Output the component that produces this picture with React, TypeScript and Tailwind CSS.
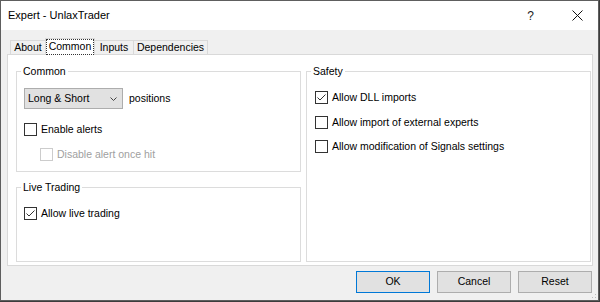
import React from "react";

function Box({ checked = false, disabled = false }: { checked?: boolean; disabled?: boolean }) {
  return (
    <span
      className={
        disabled
          ? "flex h-[13px] w-[13px] shrink-0 items-center justify-center border border-[#cccccc] bg-white"
          : "flex h-[13px] w-[13px] shrink-0 items-center justify-center border border-[#333333] bg-white"
      }
    >
      {checked && (
        <svg width="11" height="11" viewBox="0 0 11 11">
          <path d="M1.5 5.5 L4 8 L9.5 2.5" fill="none" stroke="#333333" strokeWidth="1" />
        </svg>
      )}
    </span>
  );
}

function Check({ label, checked = false, disabled = false, className = "" }: { label: string; checked?: boolean; disabled?: boolean; className?: string }) {
  return (
    <div className={"flex h-[13px] items-center gap-[4px] leading-[13px] " + className}>
      <Box checked={checked} disabled={disabled} />
      <span className={disabled ? "text-[#a0a0a0]" : "text-black"}>{label}</span>
    </div>
  );
}

export default function App() {
  return (
    <div className="flex h-[302px] w-[600px] bg-[#3c3c3c] font-['Liberation_Sans',Arial,sans-serif] text-[10.5px] text-black">
      <div className="relative flex h-[301px] w-[599px] flex-col border border-[#5e5e5e] bg-[#f0f0f0]">
        {/* title bar */}
        <div className="flex h-[29px] items-center bg-white pl-[7px] pr-[15px]">
          <span className="text-[11px] text-black">Expert - UnlaxTrader</span>
          <span className="ml-auto text-[12px] leading-[12px] text-[#222]">?</span>
          <svg className="ml-[38px]" width="11" height="11" viewBox="0 0 11 11">
            <path d="M0.5 0.5 L10.5 10.5 M10.5 0.5 L0.5 10.5" stroke="#111" strokeWidth="1" fill="none" />
          </svg>
        </div>
        {/* body */}
        <div className="flex flex-col pl-[6px] pr-[5px] pt-[8px]">
          {/* tabs */}
          <div className="flex h-[16px] items-end pl-[3px]">
            <div className="flex h-[14px] w-[35px] items-center justify-center border-l border-t border-[#d9d9d9] leading-[13px]">About</div>
            <div className="relative z-10 -mb-px flex h-[17px] w-[50px] border-l border-r border-t border-[#d9d9d9] bg-white p-[0px]">
              <span className="flex flex-1 items-center justify-center border border-dotted border-[#333] pb-[1px] leading-[13px]">Common</span>
            </div>
            <div className="flex h-[14px] w-[39px] items-center justify-center border-r border-t border-[#d9d9d9] leading-[13px]">Inputs</div>
            <div className="flex h-[14px] w-[74px] items-center justify-center border-r border-t border-[#d9d9d9] leading-[13px]">Dependencies</div>
          </div>
          {/* panel */}
          <div className="grid h-[212px] w-[586px] grid-cols-[285px_285px] gap-x-[5px] border border-[#d9d9d9] bg-white pl-[8px] pt-[10px]">
            <div className="flex flex-col gap-[9px]">
              <fieldset className="m-0 h-[107px] border border-[#dcdcdc] p-0">
                <legend className="ml-[4px] px-[2px] leading-[12px]">Common</legend>
                <div className="flex flex-col pl-[7px]">
                  <div className="mt-[11px] flex h-[21px] items-center">
                    <div className="flex h-[21px] w-[99px] items-center justify-between border border-[#adadad] bg-[#e1e1e1] pl-[3px] pr-[5px]">
                      <span>Long &amp; Short</span>
                      <svg width="7" height="4" viewBox="0 0 7 4">
                        <path d="M0.5 0.5 L3.5 3.5 L6.5 0.5" fill="none" stroke="#444" strokeWidth="1" />
                      </svg>
                    </div>
                    <span className="ml-[6px]">positions</span>
                  </div>
                  <Check className="mt-[14px]" label="Enable alerts" />
                  <Check className="mt-[12px] pl-[16px]" label="Disable alert once hit" disabled />
                </div>
              </fieldset>
              <fieldset className="m-0 h-[81px] border border-[#dcdcdc] p-0">
                <legend className="ml-[4px] px-[2px] leading-[12px]">Live Trading</legend>
                <div className="flex flex-col pl-[7px]">
                  <Check className="mt-[14px]" label="Allow live trading" checked />
                </div>
              </fieldset>
            </div>
            <fieldset className="m-0 h-[197px] border border-[#dcdcdc] p-0">
              <legend className="ml-[4px] px-[2px] leading-[12px]">Safety</legend>
              <div className="flex flex-col pl-[8px]">
                <Check className="mt-[14px]" label="Allow DLL imports" checked />
                <Check className="mt-[12px]" label="Allow import of external experts" />
                <Check className="mt-[11px]" label="Allow modification of Signals settings" />
              </div>
            </fieldset>
          </div>
          {/* buttons */}
          <div className="mr-[1px] mt-[5px] flex justify-end gap-[7px]">
            <button className="h-[22px] w-[74px] border border-[#0078d7] bg-[#e1e1e1] text-black">OK</button>
            <button className="h-[22px] w-[74px] border border-[#adadad] bg-[#e1e1e1] text-black">Cancel</button>
            <button className="h-[22px] w-[74px] border border-[#adadad] bg-[#e1e1e1] text-black">Reset</button>
          </div>
        </div>
        <svg className="absolute bottom-[1px] right-[1px]" width="5" height="5" viewBox="0 0 5 5">
          <rect x="3" y="0" width="1" height="1" fill="#bcbcbc" />
          <rect x="0" y="3" width="1" height="1" fill="#bcbcbc" />
          <rect x="3" y="3" width="1" height="1" fill="#bcbcbc" />
        </svg>
      </div>
    </div>
  );
}
